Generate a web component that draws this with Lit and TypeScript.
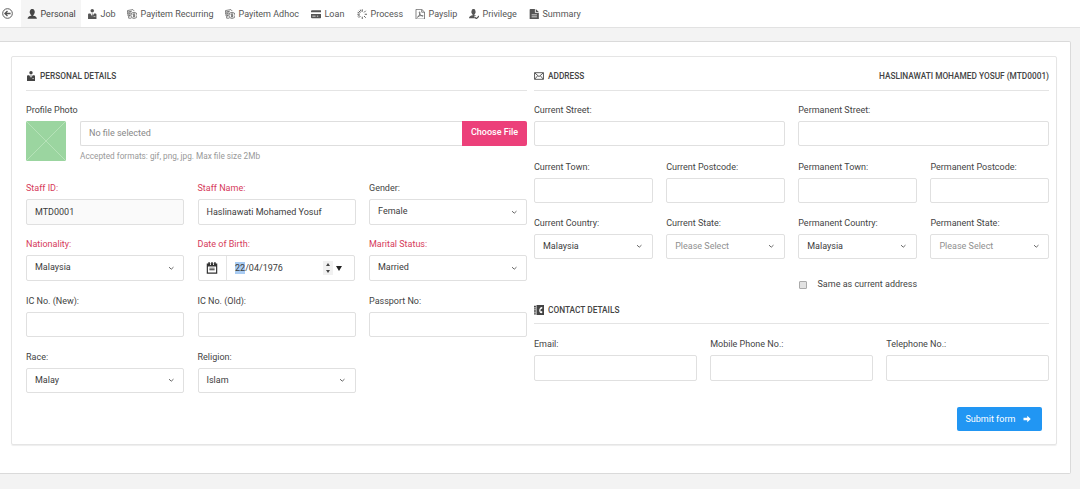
import { LitElement, html, svg, css, nothing } from "lit";
import { customElement, property } from "lit/decorators.js";

const icons: Record<string, unknown> = {
  back: svg`<g fill="none" stroke="currentColor" stroke-width="1.4"><circle cx="8" cy="8" r="7"/><path d="M12.500 8H5M8 4.300L4.300 8L8 11.700" stroke-width="2"/></g>`,
  user: svg`<path d="M9.500 10.300v-1c.9-.6 1.700-1.800 1.900-3C12 6 12 3.300 11.400 2.700 11 .9 9.800 0 8 0S5 .9 4.600 2.700C4 3.300 4 6 4.600 6.300c.2 1.200 1 2.400 1.900 3v1C3 10.600.9 12.400.9 15h14.200c0-2.600-2.100-4.400-5.600-4.700z"/>`,
  tie: svg`<circle cx="8" cy="2.700" r="2.700"/><path d="M1.600 8.200c0-.8.6-1.400 1.400-1.400h2.300L8 12l2.700-5.200H13c.8 0 1.400.6 1.400 1.400V16H1.600z"/><path d="M7.200 6.800h1.600l-.4 1.400.8 2.800L8 12.600 6.800 11l.8-2.800z"/><path d="M10 11h2.800v.8H10z" fill="#fff"/>`,
  cash: svg`<g fill="none" stroke="currentColor" stroke-width="1.100"><path d="M.7 2.400L9 .9l2 2.200M.7 2.400v2.300h6M.7 5v2.500h5M1.500 8v2.500H5M2.500 11v3h4M2.300 4.600l5-1.200M2.300 7.300h3M3 10h2"/><circle cx="10.700" cy="9.700" r="4.700"/><path d="M12.500 7.700H9.900c-1.100 0-1.100 1.900 0 1.900h1.500c1.200 0 1.200 2 0 2H9M10.700 6.600v6.200"/></g>`,
  card: svg`<path d="M0 3.500C0 2.600.6 2 1.500 2h13c.9 0 1.500.6 1.500 1.500V5H0zM0 7.500h16v5c0 .9-.6 1.500-1.500 1.500h-13C.6 14 0 13.400 0 12.500z"/><path d="M2 10.300h5v1.300H2zM9 10.300h2v1.300H9z" fill="#fff"/>`,
  spinner: svg`<g stroke="currentColor" stroke-width="1.400" fill="none"><path d="M8 .5v3.700M8 11.800v3.700M.5 8h3.700M11.800 8h3.700M2.700 2.700l2.600 2.600M10.700 10.700l2.600 2.600M2.700 13.300l2.600-2.600M10.700 5.300l2.600-2.600M5.100 1l1 2.800M1 10.900l2.800-1M1 5.100l2.800 1"/></g>`,
  pdf: svg`<g fill="none" stroke="currentColor" stroke-width="1.100"><path d="M1.500.6h8.800l4.200 4.100v10.700h-13zM10.200.8v4.100h4.100"/><path d="M3.800 12.800c1.900-1.100 4.300-5.300 3.700-8-.3-.8-1.300-.4-1 .7.500 2.300 2.700 4.700 4.800 5.600 1.400.4 1.600-1 0-1.200-2.400-.2-5.200.6-7.100 1.700-.7.500-.8 1-.4 1.200z"/></g>`,
  usercheck: svg`<path d="M8 12c0-.7.6-1.200 1.300-1.200h1.200l.5-.5c-.9-.4-1.900-.6-3-.7V8.800c.9-.5 1.500-1.600 1.700-2.600.5-.3.6-2.700 0-3.200C9.600 1 8.600 0 6.900 0 5.200 0 4.100 1 4 3c-.6.500-.5 2.900 0 3.200.2 1 .8 2.100 1.700 2.600v.8C2.500 9.900 0 11.500 0 14h9.500z"/><path d="M8.800 12.300l2.400 2.500L15.500 10.500" fill="none" stroke="currentColor" stroke-width="1.800"/>`,
  doc: svg`<path d="M1 1.200C1 .5 1.500 0 2.200 0H9v5.800h6v9c0 .7-.5 1.200-1.200 1.200H2.200C1.500 16 1 15.500 1 14.800zM10.300 0L15 4.600h-4.700z"/><path d="M4 8.500h8v1H4zM4 11.500h8v1H4z" fill="#fff"/>`,
  mail: svg`<g fill="none" stroke="currentColor" stroke-width="1.400"><path d="M.9 2.700h14.200v10.600H.9zM1.200 3l6.800 6 6.800-6M1.200 13l4.600-5.300M14.800 13l-4.600-5.300"/></g>`,
  book: svg`<path d="M4 0h12v16H4z"/><path d="M0 1h3v2H0zM0 4h3v2H0zM0 7h3v2H0zM0 10h3v2H0zM0 13h3v2H0z"/><path d="M12.500 3c-4.800.2-6 9.500-.3 10.200l1.500-2.200-1.700-1.500-1 .8c-1-.8-.8-3.500.3-4.500l1.200.6 1.200-2z" fill="#fff"/>`,
  calendar: svg`<path d="M1 2h14v13.500H1zM2.600 6v7.900h10.800V6z" fill-rule="evenodd"/><path d="M3 .3h2.200V4H3zM6.900.3h2.200V4H6.900zM10.800.3H13V4h-2.200z"/><path d="M5.400 2h1.200v2H5.400zM9.400 2h1.200v2H9.400z" fill="#fff"/><path d="M4.500 7.500h7v1.200h-7zM4.500 9.700h7v1.200h-7z"/>`,
  chevron: svg`<path d="M2.500 5.300L8 10.300l5.500-5" fill="none" stroke="currentColor" stroke-width="2.200"/>`,
  arrow: svg`<path d="M8.500 1.500l7 6.500-7 6.500v-4H1v-5h7.500z"/>`,
};

const icon = (name: string, cls = "") =>
  html`<svg class="icon ${cls}" viewBox="0 0 16 16" fill="currentColor">${icons[name]}</svg>`;

const base = css`
  * { box-sizing: border-box; }
  .icon { display: block; flex: none; width: 10px; height: 10px; }
`;

@customElement("form-field")
export class FormField extends LitElement {
  @property() label = "";
  @property() value = "";
  @property() kind = "text";
  @property({ type: Boolean }) required = false;

  static styles = [base, css`
    :host { display: block; min-width: 0; }
    .label { height: 14px; line-height: 14px; margin-bottom: 4px; white-space: nowrap; color: #444; }
    .required { color: #d63a5a; }
    .box {
      display: flex; align-items: center; height: 25.500px; padding: 0 9px 0 8px;
      border: 1px solid #e0e0e0; border-radius: 2px; background: #fff; color: #3c3c3c;
      line-height: 14px; white-space: nowrap; overflow: hidden;
    }
    .readonly { background: #fafafa; }
    .value { flex: 1; }
    .select .value { padding-bottom: 2px; }
    .muted { color: #909090; }
    .chevron { width: 6.500px; height: 6.500px; color: #555; }
    .date { padding: 0; margin-right: 1px; }
    .addon {
      display: flex; align-items: center; justify-content: center;
      width: 28px; height: 100%; border-right: 1px solid #e4e4e4; margin-right: 8.500px; color: #333;
    }
    .addon .icon { width: 12px; height: 12px; }
    .day { display: inline-block; height: 12px; line-height: 12px; background: #a9ccf3; }
    .spin {
      display: flex; flex-direction: column; align-items: center; justify-content: center;
      gap: 4px; width: 10px; height: 14px; background: #f1f1f1; margin-right: 3px;
    }
    .up, .down, .drop { border: 2.500px solid transparent; width: 0; height: 0; }
    .up { border-top: 0; border-bottom: 3px solid #444; }
    .down { border-bottom: 0; border-top: 3px solid #444; }
    .drop { border-width: 5px 3px 0; border-top-color: #222; margin-right: 11.500px; }
  `];

  render() {
    return html`
      <div class="label ${this.required ? "required" : ""}">${this.label}</div>
      ${this.kind === "date" ? this.date() : html`
        <div class="box ${this.kind}">
          <span class="value ${this.value === "Please Select" ? "muted" : ""}">${this.value}</span>
          ${this.kind === "select" ? icon("chevron", "chevron") : nothing}
        </div>`}
    `;
  }

  private date() {
    const [day, ...rest] = this.value.split("/");
    return html`<div class="box date">
      <span class="addon">${icon("calendar")}</span>
      <span class="value"><span class="day">${day}</span>/${rest.join("/")}</span>
      <span class="spin"><i class="up"></i><i class="down"></i></span><i class="drop"></i>
    </div>`;
  }
}

const tabs = [
  ["user", "Personal"], ["tie", "Job"], ["cash", "Payitem Recurring"], ["cash", "Payitem Adhoc"],
  ["card", "Loan"], ["spinner", "Process"], ["pdf", "Payslip"], ["usercheck", "Privilege"], ["doc", "Summary"],
];

type Field = [label: string, value?: string, kind?: string, required?: boolean];

const personal: Field[] = [
  ["Staff ID:", "MTD0001", "readonly", true],
  ["Staff Name:", "Haslinawati Mohamed Yosuf", "text", true],
  ["Gender:", "Female", "select"],
  ["Nationality:", "Malaysia", "select", true],
  ["Date of Birth:", "22/04/1976", "date", true],
  ["Marital Status:", "Married", "select", true],
  ["IC No. (New):"], ["IC No. (Old):"], ["Passport No:"],
  ["Race:", "Malay", "select"], ["Religion:", "Islam", "select"],
];
const streets: Field[] = [["Current Street:"], ["Permanent Street:"]];
const places: Field[] = [
  ["Current Town:"], ["Current Postcode:"], ["Permanent Town:"], ["Permanent Postcode:"],
  ["Current Country:", "Malaysia", "select"], ["Current State:", "Please Select", "select"],
  ["Permanent Country:", "Malaysia", "select"], ["Permanent State:", "Please Select", "select"],
];
const contacts: Field[] = [["Email:"], ["Mobile Phone No.:"], ["Telephone No.:"]];

const fields = (list: Field[]) => list.map(([label, value = "", kind = "text", required = false]) =>
  html`<form-field .label=${label} .value=${value} .kind=${kind} .required=${required}></form-field>`);

@customElement("app-root")
export class AppRoot extends LitElement {
  static styles = [base, css`
    :host {
      display: block; height: 489px; overflow: hidden; background: #f3f3f3;
      font: 9px/14px Roboto, sans-serif; color: #444;
    }
    .nav {
      display: grid; grid-template-columns: 21px 60px 40px 98px 86px 46px 58px 54px 60px 64px;
      height: 28px; background: #fff; border-bottom: 1px solid #e2e2e2; color: #555;
    }
    .back { display: flex; align-items: center; padding-left: 2px; }
    .back .icon { width: 11px; height: 11px; }
    .tab { display: flex; align-items: center; gap: 3.500px; padding: 1px 0 0 5.500px; height: 27px; white-space: nowrap; }
    .tab .icon { width: 10.500px; height: 10.500px; }
    .tab:nth-child(2) { background: #f5f5f5; color: #444; }
    .panel {
      width: 1071px; height: 433px; margin-top: 13px; padding: 14px 0 0 11px;
      background: #fff; border: 1px solid #dadada; border-left: 0; border-top-right-radius: 2px; border-bottom-right-radius: 2px;
    }
    .card {
      display: grid; grid-template-columns: 501px 515px; gap: 7px; width: 1045.500px; height: 389px;
      padding: 12px 0 0 14px; border: 1px solid #e5e5e5; border-radius: 2px; box-shadow: 0 1px 1px #eee;
    }
    .legend {
      display: flex; align-items: center; height: 21.500px; gap: 4px; padding-bottom: 6px;
      border-bottom: 1px solid #e4e4e4; font-size: 8.300px; font-weight: 500; color: #444; white-space: nowrap;
    }
    .legend .icon { margin-top: -1px; }
    .name { margin-left: auto; }
    .caption { height: 14px; margin: 12px 0 4.500px; }
    .upload { display: flex; gap: 14px; height: 60px; }
    .photo { display: block; width: 40px; height: 40px; }
    .chooser { flex: 1; }
    .file { display: flex; height: 25px; }
    .filename {
      flex: 1; padding: 4px 8px; border: 1px solid #dedede; border-right: 0;
      border-radius: 2px 0 0 2px; color: #888;
    }
    .choose {
      width: 65px; line-height: 23px; text-align: center; background: #ec407a; color: #fff;
      font-weight: 500; border-radius: 0 2px 2px 0;
    }
    .hint { margin-top: 3px; font-size: 8.250px; color: #999; }
    .fields { display: grid; column-gap: 13.500px; row-gap: 12.800px; }
    .thirds { grid-template-columns: repeat(3, 1fr); }
    .streets { grid-template-columns: 1fr 1fr; margin: 12px 0 13.500px; }
    .places { grid-template-columns: repeat(4, 1fr); }
    .same { display: flex; align-items: center; gap: 11px; margin: 18px 0 0 264.500px; height: 14px; }
    .check { width: 8px; height: 8px; border: 1px solid #aaa; border-radius: 1px; background: #e2e2e2; margin-top: 2px; }
    .contact { margin: 11px 0 13px; height: 22px; }
    .contact .icon { margin-top: 1px; }
    .actions { display: flex; justify-content: flex-end; padding: 26px 7px 0 0; }
    .submit {
      display: flex; align-items: center; gap: 8px; width: 85px; height: 24px; padding-left: 8.500px;
      border-radius: 2px; background: #2196f3; color: #fff; white-space: nowrap;
    }
    .submit .icon { width: 8px; height: 8px; }
  `];

  render() {
    return html`
      <nav class="nav">
        <span class="back">${icon("back")}</span>
        ${tabs.map(([name, label]) => html`<span class="tab">${icon(name)}<span>${label}</span></span>`)}
      </nav>
      <main class="panel">
        <div class="card">
          <section>
            <div class="legend">${icon("tie")}<span>PERSONAL DETAILS</span></div>
            <div class="caption">Profile Photo</div>
            <div class="upload">
              <svg class="photo" viewBox="0 0 40 40">
                <rect width="40" height="40" rx="1.500" fill="#9bd5a0"/>
                <path d="M1 1L39 39M39 1L1 39" stroke="#bde5be" stroke-width=".8"/>
              </svg>
              <div class="chooser">
                <div class="file"><span class="filename">No file selected</span><span class="choose">Choose File</span></div>
                <div class="hint">Accepted formats: gif, png, jpg. Max file size 2Mb</div>
              </div>
            </div>
            <div class="fields thirds">${fields(personal)}</div>
          </section>
          <section>
            <div class="legend">${icon("mail")}<span>ADDRESS</span><span class="name">HASLINAWATI MOHAMED YOSUF (MTD0001)</span></div>
            <div class="fields streets">${fields(streets)}</div>
            <div class="fields places">${fields(places)}</div>
            <div class="same"><span class="check"></span><span>Same as current address</span></div>
            <div class="legend contact">${icon("book")}<span>CONTACT DETAILS</span></div>
            <div class="fields thirds">${fields(contacts)}</div>
            <div class="actions"><span class="submit"><span>Submit form</span>${icon("arrow")}</span></div>
          </section>
        </div>
      </main>
    `;
  }
}
